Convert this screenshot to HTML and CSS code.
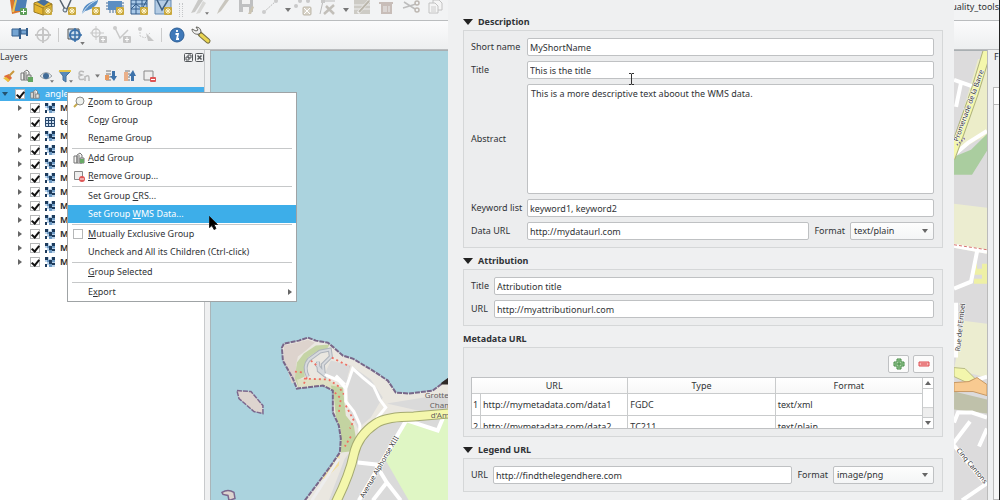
FILE: index.html
```
<!DOCTYPE html>
<html lang="en">
  <head>
    <meta charset="UTF-8" />
    <meta name="viewport" content="width=device-width, initial-scale=1.0" />
    <title>Set Group WMS Data</title>
    <link rel="stylesheet" href="styles.css">
  </head>
  <body>
    <!-- shared icons -->
    <svg class="defs" aria-hidden="true">
      <symbol id="raster" viewBox="0 0 10 10">
        <path fill="#b9d2ea" d="M0 0h10v10H0z"/>
        <path fill="#1d3b5c" d="M0 0h3v3H0zM7 0h3v3H7zM4 3h3v4H4zM0 7h2v3H0zM7 6h3v2H7z"/>
        <path fill="#6d9ac4" d="M2 3h2v2H2zM7 3h3v2H7zM4 7h3v3H4z"/>
        <path fill="#fff" d="M4 0h2v2H4zM0 5h2v2H0zM2 8h2v2H2z"/>
      </symbol>
      <symbol id="star" viewBox="0 0 8 8">
        <rect width="8" height="8" rx="1" fill="#c9a83c"/>
        <path d="M4 1v6M1 4h6M2 2l4 4M6 2L2 6" stroke="#fff6cf" stroke-width="1"/>
      </symbol>
      <symbol id="caret" viewBox="0 0 6 4"><path d="M0 0h6L3 4z" fill="#777"/></symbol>
      <symbol id="group" viewBox="0 0 12 12">
        <path d="M1 4h3v7H1zM4 3l3-2 2 2v8H4z" fill="#f4f4f2" stroke="#777"/>
        <path d="M6 3v7M7 6h4v5H7z" fill="#e4e4e0" stroke="#777"/>
      </symbol>
    </svg>

    <div class="app">
      <div class="toolbar toolbar-top">
        <button aria-label="Data source"><svg viewBox="0 0 24 20"><path d="M3 0h12l-2 12-8 2z" fill="#d9772f"/><path d="M7 0h13l-2 11H8z" fill="#4d7fb5"/><path d="M9 0l-3 12" stroke="#eac75b" stroke-width="2"/><rect x="13" y="8" width="7" height="7" rx="1" fill="#5c9e58"/><path d="M16.500 9v5M14 11.500h5" stroke="#fff"/></svg></button>
        <button aria-label="GeoPackage"><svg viewBox="0 0 24 20"><path d="M3 3l9-3 9 4v8l-9 3-9-3z" fill="#e4b52f" stroke="#9a7b24"/><path d="M6 2l6-3 6 3-5 4z" fill="#456f9f"/><path d="M3 4l9 4 9-4M12 8v7" stroke="#9a7b24" fill="none"/><use href="#star" x="13" y="7" width="8" height="8"/></svg></button>
        <button aria-label="New shapefile"><svg viewBox="0 0 24 20"><path d="M5 0l6 11 5-11" fill="none" stroke="#54616d" stroke-width="1.500"/><circle cx="10" cy="10" r="2" fill="#dceaf6" stroke="#54616d"/><use href="#star" x="13" y="7" width="8" height="8"/></svg></button>
        <button aria-label="New SpatiaLite layer"><svg viewBox="0 0 24 20"><path d="M3 14C4 6 9 2 19 0c0 5-7 10-13 11z" fill="#568dc4"/><path d="M3 14C7 7 12 3 18 0" stroke="#dbe9f5" fill="none"/><use href="#star" x="13" y="7" width="8" height="8"/></svg></button>
        <button aria-label="New scratch layer"><svg viewBox="0 0 24 20"><rect x="5" y="1" width="14" height="9" fill="#5c8ec2"/><path d="M7 10v3M10 10v3M13 10v3M3 3h2M3 6h2M3 9h2M19 3h2M19 6h2" stroke="#476c96"/><use href="#star" x="13" y="7" width="8" height="8"/></svg></button>
        <button aria-label="New mesh"><svg viewBox="0 0 24 20"><path d="M4 0h16v14H4z" fill="#a9c9e8" stroke="#315b8a"/><path d="M4 4h16M4 9h16M9 0v14M15 0v14M4 9l5-5 6 5 5-9" stroke="#315b8a" fill="none"/><use href="#star" x="13" y="7" width="8" height="8"/></svg></button>
        <button aria-label="New virtual layer"><svg viewBox="0 0 24 20"><path d="M4 0h16v14H4z" fill="#b4cce4" stroke="#6389b1"/><path d="M6 0l5 10 6-10" stroke="#3e5e80" fill="none" stroke-width="1.500"/><use href="#star" x="13" y="7" width="8" height="8"/></svg></button>
        <span class="grip"></span>
        <button aria-label="Current edits"><svg viewBox="0 0 24 20"><path d="M4 13L11 0h5L8 12z" fill="#c9c9c7"/><path d="M9 14L16 1l3 2-6 10z" fill="#d8d8d6"/><use href="#caret" x="18" y="12" width="4" height="3"/></svg></button>
        <button aria-label="Toggle editing"><svg viewBox="0 0 24 20"><path d="M6 14l2-5L14 0h4l-8 11z" fill="#c9c6be"/></svg></button>
        <button aria-label="Save edits"><svg viewBox="0 0 24 20"><path d="M4 0h14v12H4z" fill="#bfc0c1"/><path d="M7 0h8v4H7zM8 7h6v5H8z" fill="#f1f1f1"/><path d="M13 14l4-8 2 1-3 7z" fill="#cbc4b2"/></svg></button>
        <button class="wide" aria-label="Add line"><svg viewBox="0 0 24 20"><path d="M5 12L17 1" stroke="#bcbcbc" stroke-dasharray="2 1"/><circle cx="5" cy="12" r="2" fill="#ccc"/><circle cx="17" cy="1" r="2" fill="#ccc"/></svg><svg class="drop"><use href="#caret"/></svg></button>
        <button aria-label="Move features"><svg viewBox="0 0 24 20"><circle cx="3" cy="6" r="2" fill="#c9c9c9"/><circle cx="7" cy="1" r="2" fill="#c9c9c9"/><circle cx="15" cy="1" r="2" fill="#c9c9c9"/><rect x="10" y="7" width="8" height="8" rx="1" fill="#d8d3c8" stroke="#beb8aa"/><path d="M11 8l6 6M17 8l-6 6" stroke="#fff"/></svg></button>
        <button class="wide" aria-label="Vertex tool"><svg viewBox="0 0 24 20"><path d="M3 14L6 1h12" stroke="#bbb" fill="none"/><path d="M7 14L17 5M9 6l8 8" stroke="#c2bfb9" stroke-width="2.500"/><rect x="4" y="0" width="4" height="3" fill="#c9c9c9"/></svg><svg class="drop"><use href="#caret"/></svg></button>
        <button aria-label="Modify attributes"><svg viewBox="0 0 24 20"><path d="M3 0h16v14H3z" fill="#cdcbc5"/><path d="M3 5h16M3 9h16" stroke="#eee"/><path d="M7 13L18 1" stroke="#f2f2f2" stroke-width="3"/><path d="M8 12L18 1" stroke="#bab6ab" stroke-width="2"/></svg></button>
        <button aria-label="Delete selected"><svg viewBox="0 0 24 20"><path d="M4 2h14v2H4zM6 4h11v10H6z" fill="#c8bdb8"/><path d="M9 6v6M11 6v6M14 6v6" stroke="#eee"/></svg></button>
        <button aria-label="Cut"><svg viewBox="0 0 24 20"><path d="M5 2l11 7M4 8l13-4" stroke="#bdbdbd" stroke-width="1.500"/><circle cx="18" cy="3" r="2" fill="none" stroke="#bdb7b2" stroke-width="1.500"/><circle cx="18" cy="10" r="2" fill="none" stroke="#bdb7b2" stroke-width="1.500"/></svg></button>
        <button aria-label="Copy"><svg viewBox="0 0 24 20"><path d="M10 0h6l3 3v7h-9z" fill="#f5f5f5" stroke="#c2c2c2"/><path d="M6 3h6l3 3v7H6z" fill="#f5f5f5" stroke="#c2c2c2"/><path d="M8 7h5M8 9h5M8 11h5" stroke="#ccc"/></svg></button>
        <span class="plugin-name">quality_tools</span>
      </div>

      <div class="toolbar toolbar-second">
        <button aria-label="Pin labels"><svg viewBox="0 0 24 24"><path d="M5 6h7v7H5zM14 7h6v4h-6z" fill="#75a5d3" stroke="#355f8d"/><path d="M13 5v11M20 5v8" stroke="#355f8d" stroke-width="2"/></svg></button>
        <button aria-label="Georeference"><svg viewBox="0 0 24 24"><circle cx="12" cy="12" r="6" fill="none" stroke="#c6c6c6" stroke-width="1.500"/><path d="M12 4v16M4 12h16" stroke="#c6c6c6" stroke-width="2"/></svg></button>
        <span class="separator"></span>
        <button aria-label="Map tool"><svg viewBox="0 0 24 24"><path d="M6 6h11v10H6z" fill="#cfe0ef" stroke="#555"/><circle cx="13" cy="12" r="5" fill="none" stroke="#3b71ab" stroke-width="2"/><path d="M13 5v14M7 12h13" stroke="#3b71ab" stroke-width="1.500"/><use href="#caret" x="18" y="19" width="5" height="3"/></svg></button>
        <button aria-label="Add ring"><svg viewBox="0 0 24 24"><circle cx="10" cy="10" r="4" fill="none" stroke="#c9c9c9" stroke-width="1.500"/><path d="M10 3v14M4 10h14" stroke="#c9c9c9"/><rect x="13" y="13" width="8" height="7" rx="1" fill="#c6c6c6"/><path d="M17 14v5M15 16.500h4" stroke="#fff"/></svg></button>
        <button aria-label="Add part"><svg viewBox="0 0 24 24"><path d="M5 5l5 10 8-8" fill="none" stroke="#c9c9c9" stroke-width="1.500"/><circle cx="5" cy="5" r="2" fill="#ccc"/><rect x="13" y="13" width="8" height="7" rx="1" fill="#c6c6c6"/><path d="M17 14v5M15 16.500h4" stroke="#fff"/></svg></button>
        <button aria-label="Reshape"><svg viewBox="0 0 24 24"><path d="M6 6v7l5 2 5-5" fill="none" stroke="#ccc" stroke-dasharray="2 1"/><circle cx="6" cy="6" r="2" fill="#ccc"/><path d="M12 10l8 8-6 0z" fill="#c6c6c6"/></svg></button>
        <span class="separator"></span>
        <button aria-label="Information"><svg viewBox="0 0 24 24"><circle cx="12" cy="12" r="7" fill="#3f79b9" stroke="#2c5e95"/><path d="M12 7v2M10.500 11H13l-1 5h2" stroke="#fff" stroke-width="1.800" fill="none"/></svg></button>
        <button aria-label="Settings"><svg viewBox="0 0 24 24"><path d="M11 11l8 7" stroke="#777043" stroke-width="5" stroke-linecap="round"/><path d="M12 12l7 6" stroke="#ead552" stroke-width="3" stroke-linecap="round"/><path d="M3 6c0 4 4 6 7 5l2-2c0-3-2-5-5-5l2 3-2 1z" fill="#f0f0ef" stroke="#65645f"/></svg></button>
      </div>

      <div class="workspace">
        <section class="layers">
          <div class="panel-title">
            <h2>Layers</h2>
            <button class="panel-button" aria-label="Float"><svg viewBox="0 0 9 9"><rect x=".5" y=".5" width="8" height="8" rx="1"/><path d="M4 2h3v3H4zM2 4h3v3H2z"/></svg></button>
            <button class="panel-button" aria-label="Close"><svg viewBox="0 0 9 9"><rect x=".5" y=".5" width="8" height="8" rx="1"/><path d="M2.500 2.500l4 4M6.500 2.500l-4 4" stroke-width="1.500"/></svg></button>
          </div>
          <div class="layer-tools">
            <button aria-label="Style"><svg viewBox="0 0 16 16"><path d="M4 8l5-2 3 4-4 4z" fill="#df6b3a"/><path d="M6 9l4 3-2 2-5-4z" fill="#edc13c"/><path d="M9 8l5-5" stroke="#c9973c" stroke-width="2"/></svg></button>
            <button aria-label="Add group"><svg viewBox="0 0 16 16"><use href="#group" x="1" y="1" width="12" height="12"/><rect x="9" y="9" width="5" height="5" fill="#63a560"/></svg></button>
            <button aria-label="Themes"><svg viewBox="0 0 16 16"><path d="M2 8q6-7 12 0-6 6-12 0z" fill="#e4eaf0" stroke="#9ca2a6"/><circle cx="8" cy="8" r="3" fill="#416b96"/><use href="#caret" x="12" y="12" width="4" height="3"/></svg></button>
            <button aria-label="Filter"><svg viewBox="0 0 16 16"><path d="M2 3h12L9 8v6l-3-2V8z" fill="#5588bb" stroke="#456f98"/><path d="M2 2h12v2H2z" fill="#e3c448"/><use href="#caret" x="12" y="12" width="4" height="3"/></svg></button>
            <button aria-label="Filter by expression"><svg viewBox="0 0 16 16"><path d="M8 4Q3 2 3 6l3 1-3 1q-1 5 5 3M9 8v5M9 9q4-3 4 1v3" fill="none" stroke="#bbb" stroke-width="1.500"/></svg></button>
            <svg class="drop" viewBox="0 0 6 4"><use href="#caret"/></svg>
            <button aria-label="Expand all"><svg viewBox="0 0 16 16"><path d="M3 3h5M3 6h5M3 9h5M3 12h5" stroke="#777"/><path d="M2 7h4v5H2z" fill="#e99a5f"/><path d="M9 3h3v5h2l-3 5-4-5h2z" fill="#3d72aa"/></svg></button>
            <button aria-label="Collapse all"><svg viewBox="0 0 16 16"><path d="M3 3h5M3 6h5M3 9h5M3 12h5" stroke="#777"/><path d="M2 4h4v9H2z" fill="#eab08a"/><path d="M9 13h3V8h2l-3-6-4 6h2z" fill="#3d72aa"/></svg></button>
            <button aria-label="Remove layer"><svg viewBox="0 0 16 16"><path d="M3 3h9v9H3z" fill="#eee" stroke="#888"/><rect x="9" y="9" width="6" height="5" rx="1" fill="#de5555"/><path d="M10 11.500h4" stroke="#fff"/></svg></button>
          </div>
          <ul class="tree">
            <li class="row root"><span class="arrow open"></span><input type="checkbox" aria-label="angle" checked><svg><use href="#group"/></svg><span>angle</span></li>
            <li class="row"><span class="arrow"></span><input type="checkbox" aria-label="Layer 1" checked><svg><use href="#raster"/></svg><b>M</b></li>
            <li class="row"><span></span><input type="checkbox" aria-label="Layer 2" checked><svg viewBox="0 0 10 10"><path d="M.5.5h9v9h-9z" fill="#cfe0f1" stroke="#28476c"/><path d="M3.500 0v10M6.500 0v10M0 3.500h10M0 6.500h10" stroke="#28476c"/></svg><b>te</b></li>
            <li class="row"><span class="arrow"></span><input type="checkbox" aria-label="Layer 3" checked><svg><use href="#raster"/></svg><b>M</b></li>
            <li class="row"><span class="arrow"></span><input type="checkbox" aria-label="Layer 4" checked><svg><use href="#raster"/></svg><b>M</b></li>
            <li class="row"><span class="arrow"></span><input type="checkbox" aria-label="Layer 5" checked><svg><use href="#raster"/></svg><b>M</b></li>
            <li class="row"><span class="arrow"></span><input type="checkbox" aria-label="Layer 6" checked><svg><use href="#raster"/></svg><b>M</b></li>
            <li class="row"><span class="arrow"></span><input type="checkbox" aria-label="Layer 7" checked><svg><use href="#raster"/></svg><b>M</b></li>
            <li class="row"><span class="arrow"></span><input type="checkbox" aria-label="Layer 8" checked><svg><use href="#raster"/></svg><b>M</b></li>
            <li class="row"><span class="arrow"></span><input type="checkbox" aria-label="Layer 9" checked><svg><use href="#raster"/></svg><b>M</b></li>
            <li class="row"><span class="arrow"></span><input type="checkbox" aria-label="Layer 10" checked><svg><use href="#raster"/></svg><b>M</b></li>
            <li class="row"><span class="arrow"></span><input type="checkbox" aria-label="Layer 11" checked><svg><use href="#raster"/></svg><b>M</b></li>
            <li class="row"><span class="arrow"></span><input type="checkbox" aria-label="Layer 12" checked><svg><use href="#raster"/></svg><b>M</b></li>
          </ul>
        </section>

        <div class="map">
          <svg viewBox="210 50 777 450" preserveAspectRatio="xMinYMin slice">
            <!-- headland -->
            <path d="M281 347l2-4 15-3 9-3 8 3 12 2 6 5 9 8 10 3 20 12 15 10 8 12 13 1 24-3 16-12v122H304l24-32 11-16 1-14-2-13-6-13v-22l-10-5-26 3-4-10-10-18z" fill="#eae7e0"/>
            <path d="M283 345l14-3 10-3 7 3-9 8-8 6-2 9 2 15-6 3-8-24z" fill="#ddd3cd"/>
            <path d="M296 362l7-9 12-8 14-1-4 6-9 1-9 6-4 10 1 9-6 3v9l-4-10z" fill="#c5d4a5"/>
            <path d="M296 379l28-1 12 6 5 5-9 1-10-5-24 2z" fill="#dfe0c4"/>
            <path d="M330 385l12 2 3 28 8 10 2 12-6 14-9 1v-22l-5-14-2-20z" fill="#c3d3a1"/>
            <path d="M330 360l20 5-6 20-20-12zM353 367l17 12 12 18-12 20-13 11-8-16-4-32zM386 403l62-10v22l-65 2-22 16-13 20-4 5-16 42h120v-83zM356 448l4 52h48l-23-41z" fill="#dadada"/>
            <path d="M405 420l4 1 29 11 6-15h4v83h-40l-23-40z" fill="#dff6c4"/>
            <path d="M321 479l11-16 7-10-1 12-12 12z" fill="#f4dfa0"/>
            <path d="M338 458L311 500" stroke="#eee" stroke-width="3"/>
            <path d="M236 390l14 1 12 14v8l-9-2-15-13z" fill="#ddd4cf" stroke="#7b678d" stroke-width="1.500" stroke-dasharray="5 1"/>
            <path d="M221 492q6-4 12 0l1 6-6 2-1-5-5-1z" fill="#ddd4cf" stroke="#7b678d" stroke-width="1.500"/>
            <path d="M307 376q-5-10 1-17l11-8 10-2 1 7-8 8 1 10-5-4-1-9M315 363l9 11" fill="none" stroke="#aeb4bb" stroke-width="4"/>
            <path d="M307 376q-5-10 1-17l11-8 10-2 1 7-8 8 1 10-5-4-1-9M315 363l9 11" fill="none" stroke="#d7dade" stroke-width="2"/>
            <path d="M294 371l10 1M310 360l6 5M303 378l25 1 10 7 5 8M303 383l4-8M331 357l18 9M334 392l6 6-2 14M345 405l8 15-4 8M350 436l-6 10" fill="none" stroke="#ef6f62" stroke-width="1.800" stroke-dasharray="2 3"/>
            <path d="M324 374l14 6 7 8v13l8 10 6 13v11M335 375l9 9M345 388l7-20 10 9 11 9 6 13 6 8-9 11" fill="none" stroke="#fff" stroke-width="3"/>
            <path d="M406 419L358 500M357 462l18 2 11 18 14 18M386 482l-14 18M407 420l30 10 5-12" fill="none" stroke="#fff" stroke-width="4"/>
            <path d="M448 413l-35 3q-27 0-38 7-18 12-22 31-4 20-18 48" fill="none" stroke="#a5aa71" stroke-width="10"/>
            <path d="M448 413l-35 3q-27 0-38 7-18 12-22 31-4 20-18 48" fill="none" stroke="#f4f7ac" stroke-width="8"/>
            <path d="M304 500l24-32 11-16 1-14-2-13-6-13v-22l-10-5-26 3-4-10-10-18-1-13 2-4 15-3 9-3 8 3 12 2 6 5 9 8 10 3 20 12 15 10 8 12 13 1 24-3 16-12" fill="none" stroke="#786789" stroke-width="2" stroke-dasharray="5 1"/>
            <path d="M441 382l7-5v7h-8z" fill="#2e2926"/>
            <g class="place">
              <text x="424" y="397">Grotte</text>
              <text x="429" y="407">Cham</text>
              <text x="430" y="417">d'Am</text>
            </g>
            <text class="street" transform="translate(363 498) rotate(-60)">Avenue Alphonse XIII</text>

            <!-- town east of the dialog -->
            <path d="M940 50h60v450h-60z" fill="#dcdbdc"/>
            <path d="M978 58h22v73l-23 8-22 14v-15z" fill="#ecedc9"/>
            <path d="M954 156l17-7 16-16v17l-15 24h-18z" fill="#aacd9f"/>
            <path d="M954 203l33 4v46l-33-6zM963 320l24 3v54l-33-8z" fill="#ecedd0"/>
            <path d="M954 391l33 8v14l-33-4z" fill="#bfc1aa"/>
            <path d="M973 263h4v5h5v-5h5v20h-13v-5h8v-4h-9z" fill="#eef0a5"/>
            <path d="M954 79l20 7M961 82l-5 24M954 154l14-12 19-12M954 245l33 6M954 288l17-7 6-30M956 302v55M954 422l4-10h14l15 5M970 421l-19 25M987 428l-8 18M954 445l33 40M962 500l25-17M987 376l-13 4" fill="none" stroke="#fff" stroke-width="4"/>
            <path d="M951 157l8-22 15-42 14-46" fill="none" stroke="#afb37c" stroke-width="9"/>
            <path d="M951 157l8-22 15-42 14-46" fill="none" stroke="#f4f7ac" stroke-width="7"/>
            <path d="M954 367l11 1 10 10-8 4-13-6z" fill="#f3f6ac" stroke="#b9bc85"/>
            <path d="M954 382l15-1 8-4 10 7v11l-14-4-19 0z" fill="#f8ca91" stroke="#c89963"/>
            <path d="M954 244l33 5" stroke="#d7716d" stroke-dasharray="3 2"/>
            <path d="M957 144l8-7" stroke="#6d5ca9" stroke-width="2" stroke-dasharray="1 2"/>
            <g class="street">
              <text transform="translate(958 141) rotate(-70)">Promenade de la Barre</text>
              <text transform="translate(960 351) rotate(-84)">Rue de l'Embel</text>
              <text transform="translate(956 450) rotate(50)">Cinq Cantons</text>
            </g>
          </svg>
        </div>

        <aside class="side-panel">
          <h2>F</h2>
          <div class="side-list"></div>
        </aside>
      </div>
    </div>

    <form class="dialog">
      <details open>
        <summary>Description</summary>
        <div class="box form-grid description">
          <label for="short-name">Short name</label>
          <input type="text" id="short-name" value="MyShortName">
          <label for="title">Title</label>
          <input type="text" id="title" value="This is the title">
          <label for="abstract">Abstract</label>
          <textarea id="abstract">This is a more descriptive text aboout the WMS data.</textarea>
          <label for="keywords">Keyword list</label>
          <input type="text" id="keywords" value="keyword1, keyword2">
          <label for="data-url">Data URL</label>
          <div class="url-row">
            <input type="text" id="data-url" value="http://mydataurl.com">
            <label for="data-format">Format</label>
            <select id="data-format"><option>text/plain</option></select>
          </div>
        </div>
      </details>

      <details open>
        <summary>Attribution</summary>
        <div class="box form-grid">
          <label for="attr-title">Title</label>
          <input type="text" id="attr-title" value="Attribution title">
          <label for="attr-url">URL</label>
          <input type="text" id="attr-url" value="http://myattributionurl.com">
        </div>
      </details>

      <section>
        <h3>Metadata URL</h3>
        <div class="box metadata">
          <div class="table-buttons">
            <button type="button" aria-label="Add row"><svg viewBox="0 0 12 12"><path d="M4 1h4v3h3v4H8v3H4V8H1V4h3z" fill="#a9d3a5" stroke="#428b43"/><path d="M6 2v8M2 6h8" stroke="#428b43"/></svg></button>
            <button type="button" aria-label="Remove row"><svg viewBox="0 0 12 12"><path d="M1 4h10v4H1z" fill="#f6b4b4" stroke="#dd4c50"/><path d="M3 6h6" stroke="#dd4c50"/></svg></button>
          </div>
          <div class="table-frame">
            <div class="table-view">
              <table>
                <thead>
                  <tr><th class="num"></th><th>URL</th><th>Type</th><th>Format</th></tr>
                </thead>
                <tbody>
                  <tr><td class="num">1</td><td>http://mymetadata.com/data1</td><td>FGDC</td><td>text/xml</td></tr>
                  <tr><td class="num">2</td><td>http://mymetadata.com/data2</td><td>TC211</td><td>text/plain</td></tr>
                </tbody>
              </table>
            </div>
            <div class="scrollbar">
              <span class="up"></span>
              <div class="thumb"></div>
              <span class="down"></span>
            </div>
          </div>
        </div>
      </section>

      <details open>
        <summary>Legend URL</summary>
        <div class="box form-grid">
          <label for="legend-url">URL</label>
          <div class="url-row legend">
            <input type="text" id="legend-url" value="http://findthelegendhere.com">
            <label for="legend-format">Format</label>
            <select id="legend-format"><option>image/png</option></select>
          </div>
        </div>
      </details>
    </form>

    <menu class="context-menu">
      <li><button><svg viewBox="0 0 12 12"><path d="M1 11l4-4" stroke="#c6a94a" stroke-width="2"/><circle cx="7" cy="5" r="4" fill="#eef1ee" stroke="#8c8c88"/></svg><span><u>Z</u>oom to Group</span></button></li>
      <li><button><i></i><span>Co<u>p</u>y Group</span></button></li>
      <li><button><i></i><span>Re<u>n</u>ame Group</span></button></li>
      <li class="line"></li>
      <li><button><svg viewBox="0 0 12 12"><use href="#group"/><rect x="7" y="7" width="4" height="4" fill="#68aa67"/></svg><span><u>A</u>dd Group</span></button></li>
      <li><button><svg viewBox="0 0 12 12"><path d="M1.500 1.500h8v8h-8z" fill="#eee" stroke="#888"/><circle cx="9" cy="9" r="3" fill="#de5555"/><path d="M7 9h4" stroke="#fff"/></svg><span><u>R</u>emove Group...</span></button></li>
      <li class="line"></li>
      <li><button><i></i><span>Set Group <u>C</u>RS...</span></button></li>
      <li><button class="active"><i></i><span>Set Group <u>W</u>MS Data...</span></button></li>
      <li class="line"></li>
      <li><label><input type="checkbox"><span><u>M</u>utually Exclusive Group</span></label></li>
      <li><button><i></i><span>Uncheck and All its Children (Ctrl-click)</span></button></li>
      <li class="line"></li>
      <li><button><i></i><span><u>G</u>roup Selected</span></button></li>
      <li class="line"></li>
      <li><button><i></i><span>E<u>x</u>port</span><span class="arrow"></span></button></li>
    </menu>

    <svg class="pointer" viewBox="0 0 9 14"><path d="M.5.5v11l2.500-2 2 4 2-1-2-4h3.500z" fill="#000" stroke="#222"/></svg>
    <svg class="text-pointer" viewBox="0 0 5 12"><path d="M0 .5h2l.5.5.5-.5h2M0 11.500h2l.5-.5.5.5h2M2.500 1v10" fill="none" stroke="#333"/></svg>
  </body>
</html>
```
FILE: styles.css
```
* {
  box-sizing: border-box;
}

body {
  margin: 0;
  position: relative;
  min-height: 100vh;
  overflow: hidden;
  font-family: "Noto Sans", sans-serif;
  font-size: 9px;
  line-height: 14px;
  color: #303336;
  background-color: #eff0f1;
}

button, input, select, textarea {
  font: inherit;
  color: inherit;
  margin: 0;
}

button {
  padding: 0;
  border: 0;
  background: none;
}

h2, h3 {
  margin: 0;
  font-size: 9px;
}

h2 {
  font-weight: 400;
}

svg {
  display: block;
}

.defs {
  position: absolute;
  width: 0;
  height: 0;
}

/* main window */
.app {
  display: flex;
  flex-direction: column;
  height: 100vh;
  border-right: 1px solid #222;
}

.toolbar {
  display: flex;
  align-items: center;
  padding-left: 7px;
  background: linear-gradient(#fbfbfc, #edeff0);
  border-bottom: 1px solid #babcbe;
}

.toolbar button {
  display: flex;
  align-items: center;
  flex: none;
}

.toolbar button svg {
  width: 24px;
  height: 24px;
}

.toolbar-top {
  height: 21px;
  background: #f2f3f4;
}

.toolbar-top button svg {
  height: 20px;
}

.toolbar-second {
  height: 29px;
}

.toolbar .drop, .toolbar-top .wide .drop {
  width: 6px;
  height: 4px;
  margin: 0 2px;
}

.grip {
  width: 4px;
  height: 14px;
  margin: 0 4px;
  border: 1px dotted #c4c6c8;
  border-width: 0 1px;
}

.separator {
  width: 1px;
  height: 14px;
  margin: 0 3px;
  background-color: #ccc;
}

.plugin-name {
  margin-left: auto;
  white-space: nowrap;
  align-self: flex-start;
}

.workspace {
  display: flex;
  flex: 1;
  min-height: 0;
}

.layers {
  display: flex;
  flex-direction: column;
  flex: none;
  width: 205px;
  border-right: 1px solid #c8cacc;
}

.panel-title {
  display: flex;
  align-items: center;
  gap: 2px;
  height: 14px;
}

.panel-title h2 {
  flex: 1;
}

.panel-button svg {
  width: 9px;
  height: 9px;
  fill: none;
  stroke: #55595c;
}

.layer-tools {
  display: flex;
  align-items: center;
  gap: 3px;
  height: 23px;
}

.layer-tools button svg {
  width: 16px;
  height: 16px;
}

.layer-tools .drop {
  width: 5px;
  height: 4px;
}

.tree {
  flex: 1;
  margin: 0;
  padding: 0;
  list-style: none;
  background-color: #fff;
}

.row {
  display: grid;
  grid-template-columns: 10px 10px 10px 1fr;
  align-items: center;
  gap: 5px;
  height: 14px;
  padding-left: 15px;
}

.row svg {
  width: 10px;
  height: 10px;
}

.row.root {
  padding-left: 0;
  color: #fff;
  background-color: #45aeea;
}

.arrow {
  justify-self: center;
  border: 3px solid transparent;
  border-left: 4px solid #666;
  border-right: 0;
}

.arrow.open {
  border: 3px solid transparent;
  border-top: 4px solid #24536f;
  border-bottom: 0;
}

input[type="checkbox"] {
  appearance: none;
  display: grid;
  place-items: center;
  width: 10px;
  height: 10px;
  border: 1px solid #b5b7b8;
  background-color: #fff;
}

input[type="checkbox"]:checked::before {
  content: "";
  width: 3px;
  height: 6px;
  border: solid #111;
  border-width: 0 2px 2px 0;
  transform: rotate(40deg);
}

.map {
  flex: 1;
  min-width: 0;
  margin-left: 5px;
  border-top: 1px solid #a9afb2;
  border-left: 1px solid #a9b5b9;
  background-color: #abd3de;
  overflow: hidden;
}

.map svg {
  width: 100%;
  height: 100%;
}

.place {
  font-size: 8px;
  fill: #66625f;
}

.street {
  font-size: 7px;
  fill: #333;
  stroke: #fff;
  stroke-width: 1px;
  paint-order: stroke;
}

.side-panel {
  display: flex;
  flex-direction: column;
  width: 12px;
  border-left: 1px solid #bbb;
}

.side-panel h2 {
  padding-left: 6px;
  height: 37px;
}

.side-list {
  flex: 1;
  margin-left: 5px;
  border: 1px solid #bbb;
  border-right: 0;
  background: linear-gradient(#fff 16px, #bbb 16px, #bbb 17px, #f7f7f7 17px);
}

/* properties dialog, lies over the map */
.dialog {
  position: absolute;
  top: 0;
  bottom: 0;
  left: 448px;
  right: 46px;
  padding: 9px 11px 0 15px;
  background-color: #eff0f1;
  overflow: hidden;
}

summary, h3 {
  display: flex;
  align-items: center;
  gap: 5px;
  height: 21px;
  padding-top: 4px;
  font-size: 9px;
  font-weight: 700;
}

summary::before {
  content: "";
  border: 5px solid transparent;
  border-top: 6px solid #222;
  border-bottom: 0;
}

.box {
  padding: 7px 8px 7px 7px;
  border: 1px solid #d5d7d8;
  background-color: #ecedee;
}

.form-grid {
  display: grid;
  grid-template-columns: auto 1fr;
  align-items: center;
  gap: 5px;
}

.description {
  grid-template-columns: 51px 1fr;
}

.description label {
  white-space: nowrap;
}

input[type="text"], select, textarea {
  width: 100%;
  min-width: 0;
  height: 18px;
  padding: 0 2px;
  border: 1px solid #bfc1c3;
  border-radius: 2px;
  background-color: #fff;
}

textarea {
  display: block;
  height: 110px;
  padding: 2px 3px;
  resize: none;
}

.url-row {
  display: grid;
  grid-template-columns: 1fr auto 84px;
  align-items: center;
  gap: 5px;
}

.url-row.legend {
  grid-template-columns: 1fr auto 101px;
}

select {
  appearance: none;
  padding: 0 3px;
  background: url("data:image/svg+xml,%3Csvg xmlns='http://www.w3.org/2000/svg' viewBox='0 0 6 4'%3E%3Cpath d='M0 0h6L3 4z' fill='%23666'/%3E%3C/svg%3E") no-repeat right 5px center / 6px 4px, linear-gradient(#fdfdfd, #f4f5f6);
}

.metadata {
  display: flex;
  flex-direction: column;
  gap: 4px;
}

.table-buttons {
  display: flex;
  justify-content: flex-end;
  gap: 4px;
}

.table-buttons button {
  display: grid;
  place-items: center;
  width: 21px;
  height: 18px;
  border: 1px solid #bfc1c3;
  border-radius: 2px;
  background-color: #fbfbfb;
}

.table-buttons svg {
  width: 12px;
  height: 12px;
}

.table-frame {
  display: flex;
  height: 52px;
  border: 1px solid #bfc1c3;
  background-color: #fff;
}

.table-view {
  flex: 1;
  overflow: hidden;
}

table {
  width: 100%;
  table-layout: fixed;
  border-spacing: 0;
}

th, td {
  height: 22px;
  padding: 0 2px;
  border: solid #c9cbcc;
  border-width: 0 1px 1px 0;
  text-align: left;
}

th {
  height: 16px;
  font-weight: 400;
  text-align: center;
  background: linear-gradient(#fff, #f7f7f7);
}

th.num {
  border-right: 0;
}

.num {
  width: 9px;
  padding: 0 1px;
}

.scrollbar {
  display: flex;
  flex-direction: column;
  align-items: center;
  gap: 3px;
  width: 10px;
  padding: 3px 0;
}

.scrollbar .up {
  border: 3px solid transparent;
  border-bottom: 4px solid #666;
  border-top: 0;
}

.scrollbar .down {
  border: 3px solid transparent;
  border-top: 4px solid #666;
  border-bottom: 0;
}

.thumb {
  flex: 1;
  width: 10px;
  border: solid #c9cbcc;
  border-width: 1px 0;
  background: linear-gradient(#fff 65%, #c9cbcc 65%, #eee 70%);
}

/* context menu */
.context-menu {
  position: absolute;
  top: 92px;
  left: 67px;
  width: 230px;
  margin: 0;
  padding: 0;
  border: 1px solid #9fa3a5;
  list-style: none;
  background-color: #fff;
}

.context-menu button, .context-menu label {
  display: grid;
  grid-template-columns: 12px 1fr auto;
  align-items: center;
  gap: 3px;
  width: 100%;
  height: 18px;
  padding: 0 4px 0 5px;
  text-align: left;
}

.context-menu svg {
  width: 12px;
  height: 12px;
}

.context-menu .active {
  color: #fff;
  background-color: #3daee9;
}

.line {
  height: 2px;
  margin: 0 4px;
  border-bottom: 1px solid #c6c8c9;
}

.pointer {
  position: absolute;
  top: 216px;
  left: 209px;
  width: 9px;
  height: 14px;
}

.text-pointer {
  position: absolute;
  top: 73px;
  left: 629px;
  width: 5px;
  height: 12px;
}
```
